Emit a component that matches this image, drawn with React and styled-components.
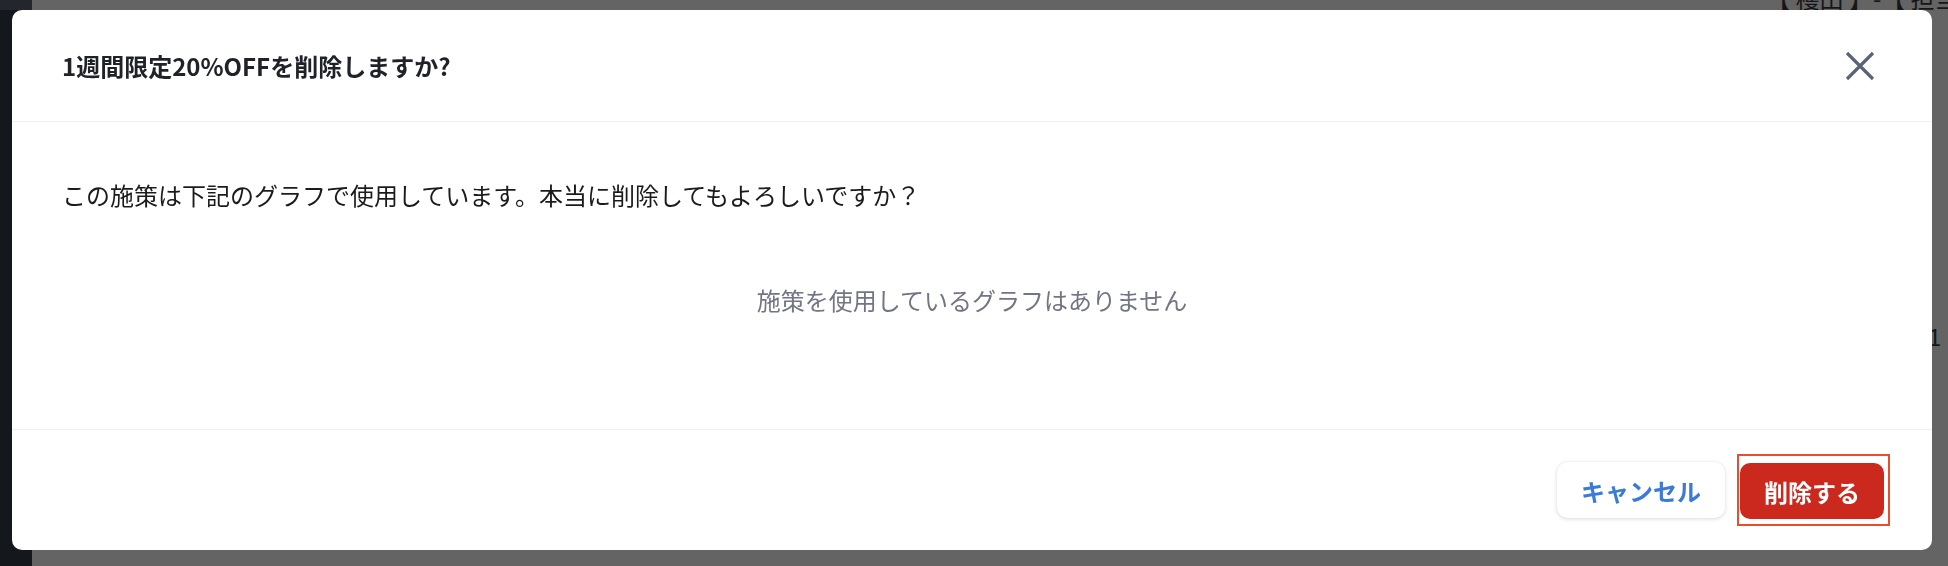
import React from 'react'
import styled, { createGlobalStyle } from 'styled-components'

const GlobalStyle = createGlobalStyle`
  html, body {
    margin: 0;
    padding: 0;
    width: 100%;
    height: 100%;
    overflow: hidden;
  }
  body {
    font-family: "Noto Sans CJK JP", "Noto Sans", sans-serif;
    background: #636463;
  }
  #root {
    height: 100%;
  }
`

const Page = styled.div`
  display: flex;
  height: 100vh;
`

const Sidebar = styled.div`
  width: 32px;
  flex-shrink: 0;
  background: #14171c;
  border-top: 10px solid #23262c;
`

const Main = styled.div`
  flex: 1;
  display: flex;
  flex-direction: column;
  align-items: flex-end;
  overflow: hidden;
  color: #161616;
  font-family: "Noto Sans CJK JP", sans-serif;
  font-size: 24px;
`

const BackText = styled.div`
  white-space: nowrap;
  line-height: 30px;
  margin-top: ${(p) => p.$top}px;
  margin-right: ${(p) => p.$right}px;
`

const Modal = styled.div`
  position: fixed;
  left: 12px;
  top: 10px;
  width: 1920px;
  height: 540px;
  background: #ffffff;
  border-radius: 10px;
  display: flex;
  flex-direction: column;
  overflow: hidden;
`

const Header = styled.div`
  height: 111px;
  display: flex;
  align-items: center;
  justify-content: space-between;
  padding: 0 57px 0 50px;
  border-bottom: 1px solid #f0f0f2;
`

const Title = styled.h2`
  margin: 0;
  font-size: 24px;
  font-weight: 700;
  color: #1f2228;
  line-height: 32px;
`

const CloseButton = styled.button`
  border: none;
  background: none;
  padding: 0;
  width: 30px;
  height: 30px;
  display: flex;
  cursor: pointer;
  color: #5d6376;
`

const Body = styled.div`
  flex: 1;
  display: flex;
  flex-direction: column;
  padding: 55px 50px 0;
`

const Message = styled.p`
  margin: 0;
  font-size: 24px;
  line-height: 36px;
  color: #1b1b1d;
`

const Empty = styled.p`
  margin: 69px 0 0;
  text-align: center;
  font-size: 24px;
  line-height: 36px;
  color: #727684;
`

const Footer = styled.div`
  height: 120px;
  border-top: 1px solid #f0f0f2;
  display: flex;
  align-items: center;
  justify-content: flex-end;
  gap: 12px;
  padding-right: 42px;
`

const FocusRing = styled.span`
  display: inline-flex;
  padding: 7px 4px 5px 1px;
  border: 2px solid #ea4d2c;
`

const Button = styled.button`
  height: 56px;
  padding: 0 24px;
  border-radius: 10px;
  border: none;
  font-family: "Noto Sans CJK JP", sans-serif;
  font-size: 24px;
  font-weight: 700;
  cursor: pointer;
  background: ${(p) => (p.$danger ? '#cb281e' : '#ffffff')};
  color: ${(p) => (p.$danger ? '#ffffff' : '#3a7bd6')};
  box-shadow: ${(p) =>
    p.$danger ? 'none' : '0 1px 4px rgba(0, 0, 0, 0.14), 0 0 1px rgba(0, 0, 0, 0.1)'};
`

export default function App() {
  return (
    <>
      <GlobalStyle />
      <Page>
        <Sidebar />
        <Main>
          <BackText $top={-17} $right={-40}>【 穫田 】-【 担当 】</BackText>
          <BackText $top={308} $right={-12}>1 1</BackText>
        </Main>
      </Page>
      <Modal role="dialog">
        <Header>
          <Title>1週間限定20%OFFを削除しますか?</Title>
          <CloseButton aria-label="閉じる">
            <svg width="30" height="30" viewBox="0 0 30 30">
              <path d="M2 2 L28 28 M28 2 L2 28" stroke="currentColor" strokeWidth="3.2" fill="none" />
            </svg>
          </CloseButton>
        </Header>
        <Body>
          <Message>この施策は下記のグラフで使用しています。本当に削除してもよろしいですか？</Message>
          <Empty>施策を使用しているグラフはありません</Empty>
        </Body>
        <Footer>
          <Button>キャンセル</Button>
          <FocusRing>
            <Button $danger>削除する</Button>
          </FocusRing>
        </Footer>
      </Modal>
    </>
  )
}
